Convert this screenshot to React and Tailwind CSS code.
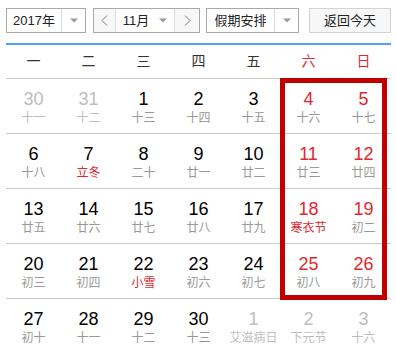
import React from "react";

const cjk = { fontFamily: '"Liberation Sans", "Noto Sans CJK SC", sans-serif' };

const rows = [
  [
    ["30", "十一", "o"], ["31", "十二", "o"], ["1", "十三"], ["2", "十四"], ["3", "十五"], ["4", "十六", "w"], ["5", "十七", "w"],
  ],
  [
    ["6", "十八"], ["7", "立冬", "", true], ["8", "二十"], ["9", "廿一"], ["10", "廿二"], ["11", "廿三", "w"], ["12", "廿四", "w"],
  ],
  [
    ["13", "廿五"], ["14", "廿六"], ["15", "廿七"], ["16", "廿八"], ["17", "廿九"], ["18", "寒衣节", "w", true], ["19", "初二", "w"],
  ],
  [
    ["20", "初三"], ["21", "初四"], ["22", "小雪", "", true], ["23", "初六"], ["24", "初七"], ["25", "初八", "w"], ["26", "初九", "w"],
  ],
  [
    ["27", "初十"], ["28", "十一"], ["29", "十二"], ["30", "十三"], ["1", "艾滋病日", "o"], ["2", "下元节", "o"], ["3", "十六", "o"],
  ],
];

const weekdays = ["一", "二", "三", "四", "五", "六", "日"];

function Caret() {
  return (
    <svg width="8" height="5" viewBox="0 0 8 5">
      <path d="M0 0.5 L8 0.5 L4 4.5 Z" fill="#9a9a9a" />
    </svg>
  );
}

function Cell({ d }) {
  const [num, lunar, kind, fest] = d;
  let numColor = "text-black";
  let lunarColor = "text-[#999999]";
  if (kind === "o") {
    numColor = "text-[#bdbdbd]";
    lunarColor = "text-[#bdbdbd]";
  } else if (kind === "w") {
    numColor = "text-[#e3262e]";
  }
  if (fest) lunarColor = "text-[#e3262e]";
  return (
    <div className="flex flex-col items-center pt-[10px]">
      <div className={`text-[18px] leading-[20px] ${numColor}`} style={{ fontFamily: '"Liberation Sans", sans-serif' }}>
        {num}
      </div>
      <div className={`text-[12px] leading-[16px] mt-[1px] ${lunarColor}`} style={cjk}>
        {lunar}
      </div>
    </div>
  );
}

export default function App() {
  return (
    <div className="w-[396px] h-[357px] bg-white overflow-hidden" style={cjk}>
      <div className="relative pl-[6px] pr-[5px]">
        {/* toolbar */}
        <div className="flex items-start pt-[8px] h-[43px] text-[13px] text-[#333333]">
          <div className="flex h-[25px] w-[80px] border border-[#a8a8a8] bg-white">
            <div className="w-[55px] flex items-center justify-center border-r border-[#dcdcdc] text-[#222]">2017年</div>
            <div className="flex-1 flex items-center justify-center"><Caret /></div>
          </div>
          <div className="ml-[7px] flex h-[25px] w-[107px] border border-[#a8a8a8] bg-white">
            <div className="w-[22px] flex items-center justify-center border-r border-[#dcdcdc] bg-[#f7f7f7]">
              <svg width="7" height="11" viewBox="0 0 7 11"><path d="M6 0.5 L1 5.5 L6 10.5" fill="none" stroke="#777" strokeWidth="1" /></svg>
            </div>
            <div className="w-[59px] flex items-center justify-center gap-[10px] border-r border-[#dcdcdc] text-[#222]">
              <span>11月</span>
              <Caret />
            </div>
            <div className="flex-1 flex items-center justify-center bg-[#f7f7f7]">
              <svg width="7" height="11" viewBox="0 0 7 11"><path d="M1 0.5 L6 5.5 L1 10.5" fill="none" stroke="#777" strokeWidth="1" /></svg>
            </div>
          </div>
          <div className="ml-[6px] flex h-[25px] w-[93px] border border-[#a8a8a8] bg-white">
            <div className="w-[68px] flex items-center justify-center border-r border-[#dcdcdc] text-[#222]">假期安排</div>
            <div className="flex-1 flex items-center justify-center"><Caret /></div>
          </div>
          <div className="ml-[10px] flex h-[25px] w-[82px] items-center justify-center border border-[#d3d3d3] bg-[#f7f7f7] text-[#222]">
            返回今天
          </div>
        </div>
        <div className="h-[2px] bg-[#4fa3f7]" />
        {/* weekday header */}
        <div className="grid grid-cols-7 h-[34px] border-b border-[#cccccc] text-[14px]">
          {weekdays.map((w, i) => (
            <div key={w} className={`flex items-center justify-center ${i >= 5 ? "text-[#e3262e]" : "text-[#333333]"}`}>
              {w}
            </div>
          ))}
        </div>
        {/* days */}
        {rows.map((r, ri) => (
          <div key={ri} className={`grid grid-cols-7 h-[55px] ${ri < rows.length - 1 ? "border-b border-[#cccccc]" : ""}`}>
            {r.map((d, di) => (
              <Cell key={di} d={d} />
            ))}
          </div>
        ))}
        {/* selection box */}
        <div className="absolute left-[280px] top-[78px] w-[107px] h-[222px] border-[5px] border-[#c00000] pointer-events-none" />
      </div>
    </div>
  );
}
